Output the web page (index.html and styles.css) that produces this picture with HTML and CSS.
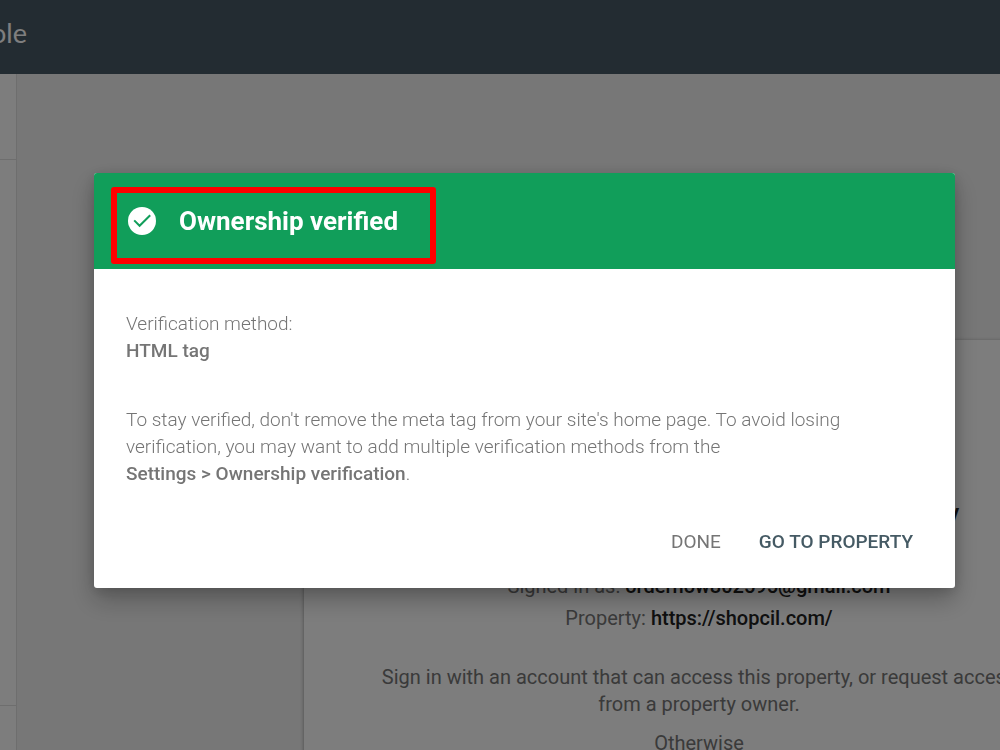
FILE: index.html
```html
<!DOCTYPE html>
<html lang="en">
<head>
    <meta charset="UTF-8">
    <meta name="viewport" content="width=device-width, initial-scale=1.0">
    <title>Ownership verified</title>
    <link rel="stylesheet" href="styles.css">
</head>
<body>
    <header class="topbar">
        <span class="logo">Console</span>
    </header>

    <div class="page">
        <nav class="sidebar">
            <div class="side-search"></div>
            <div class="side-menu"></div>
            <div class="side-footer"></div>
        </nav>
        <main class="content">
            <section class="card">
                <h1>You don't have access to this property</h1>
                <p class="account">Signed in as: <b>ordernow802595@gmail.com</b></p>
                <p class="account">Property: <b>https://shopcil.com/</b></p>
                <p class="help">Sign in with an account that can access this property, or request access<br>from a property owner.</p>
                <p class="otherwise">Otherwise</p>
            </section>
        </main>
    </div>

    <div class="overlay">
        <div class="dialog" role="dialog" aria-modal="true" aria-labelledby="dialogTitle">
            <div class="dialog-header">
                <div class="highlight">
                    <svg class="check" viewBox="0 0 28 28" aria-hidden="true">
                        <circle cx="14" cy="14" r="14" fill="#fff"/>
                        <path d="M6.2 13.4l5.4 5.4L22.2 8.2" fill="none" stroke="#119e5a" stroke-width="2"/>
                    </svg>
                    <h2 id="dialogTitle">Ownership verified</h2>
                </div>
            </div>
            <div class="dialog-body">
                <p>Verification method:<br><b>HTML tag</b></p>
                <p>To stay verified, don't remove the meta tag from your site's home page. To avoid losing verification, you may want to add multiple verification methods from the<br><b>Settings &gt; Ownership verification</b>.</p>
            </div>
            <div class="dialog-actions">
                <button type="button">DONE</button>
                <button type="button" class="primary">GO TO PROPERTY</button>
            </div>
        </div>
    </div>
</body>
</html>
```
FILE: styles.css
```css
* {
    box-sizing: border-box;
}
body {
    margin: 0;
    height: 100vh;
    display: flex;
    flex-direction: column;
    overflow: hidden;
    background: #efefef;
    color: #757575;
    font-family: Roboto, Arial, sans-serif;
    font-size: 19px;
    line-height: 27px;
}
h1, h2, p {
    margin: 0;
}
b {
    font-weight: 500;
}

/* Page behind the dialog */
.topbar {
    flex: none;
    display: flex;
    align-items: center;
    height: 74px;
    padding-bottom: 10px;
    background: #465965;
}
.logo {
    display: flex;
    justify-content: flex-end;
    width: 27px;
    color: #fff;
    font-family: Lato, sans-serif;
    font-size: 27px;
}
.page {
    flex: 1;
    display: flex;
    min-height: 0;
}
.sidebar {
    flex: none;
    display: flex;
    flex-direction: column;
    width: 17px;
    background: #fafafa;
    border-right: 1px solid #dcdcdc;
}
.side-search {
    height: 86px;
    border-bottom: 1px solid #dcdcdc;
}
.side-menu {
    flex: 1;
}
.side-footer {
    height: 45px;
    border-top: 1px solid #dcdcdc;
}
.content {
    flex: 1;
    padding: 266px 0 0 287px;
}
.card {
    width: 790px;
    padding: 155px 0 40px;
    background: #fafafa;
    box-shadow: 0 1px 4px rgba(0, 0, 0, 0.4);
    text-align: center;
    font-size: 20px;
}
.card h1 {
    margin-bottom: 35px;
    color: #212121;
    font-size: 31px;
    font-weight: 400;
    line-height: 40px;
}
.card b {
    color: #212121;
}
.account {
    line-height: 32px;
}
.help {
    margin: 30px 0 12px;
}

/* Dialog */
.overlay {
    position: fixed;
    inset: 0;
    display: flex;
    align-items: flex-start;
    padding: 173px 45px 0 94px;
    background: rgba(0, 0, 0, 0.5);
}
.dialog {
    flex: 1;
    background: #fff;
    border-radius: 3px;
    box-shadow: 0 12px 24px rgba(0, 0, 0, 0.25), 0 2px 14px rgba(0, 0, 0, 0.15);
    overflow: hidden;
}
.dialog-header {
    display: flex;
    padding: 14px 17px 5px;
    background: #119e5a;
}
.highlight {
    display: flex;
    align-items: center;
    gap: 23px;
    padding: 12px 32px 21px 11px;
    border: 6px solid #f00;
    border-radius: 3px;
}
.check {
    width: 28px;
    height: 28px;
}
.dialog h2 {
    color: #fff;
    font-size: 26px;
    font-weight: 700;
    line-height: 32px;
}
.dialog-body {
    display: flex;
    flex-direction: column;
    gap: 42px;
    padding: 41px 100px 30px 32px;
    font-weight: 300;
}
.dialog-actions {
    display: flex;
    justify-content: flex-end;
    gap: 18px;
    padding: 0 32px 23px;
}
.dialog-actions button {
    height: 48px;
    padding: 0 10px;
    border: none;
    background: none;
    color: #757575;
    font: 400 19px Roboto, Arial, sans-serif;
    cursor: pointer;
}
.dialog-actions .primary {
    color: #455a64;
    font-weight: 500;
}
```
